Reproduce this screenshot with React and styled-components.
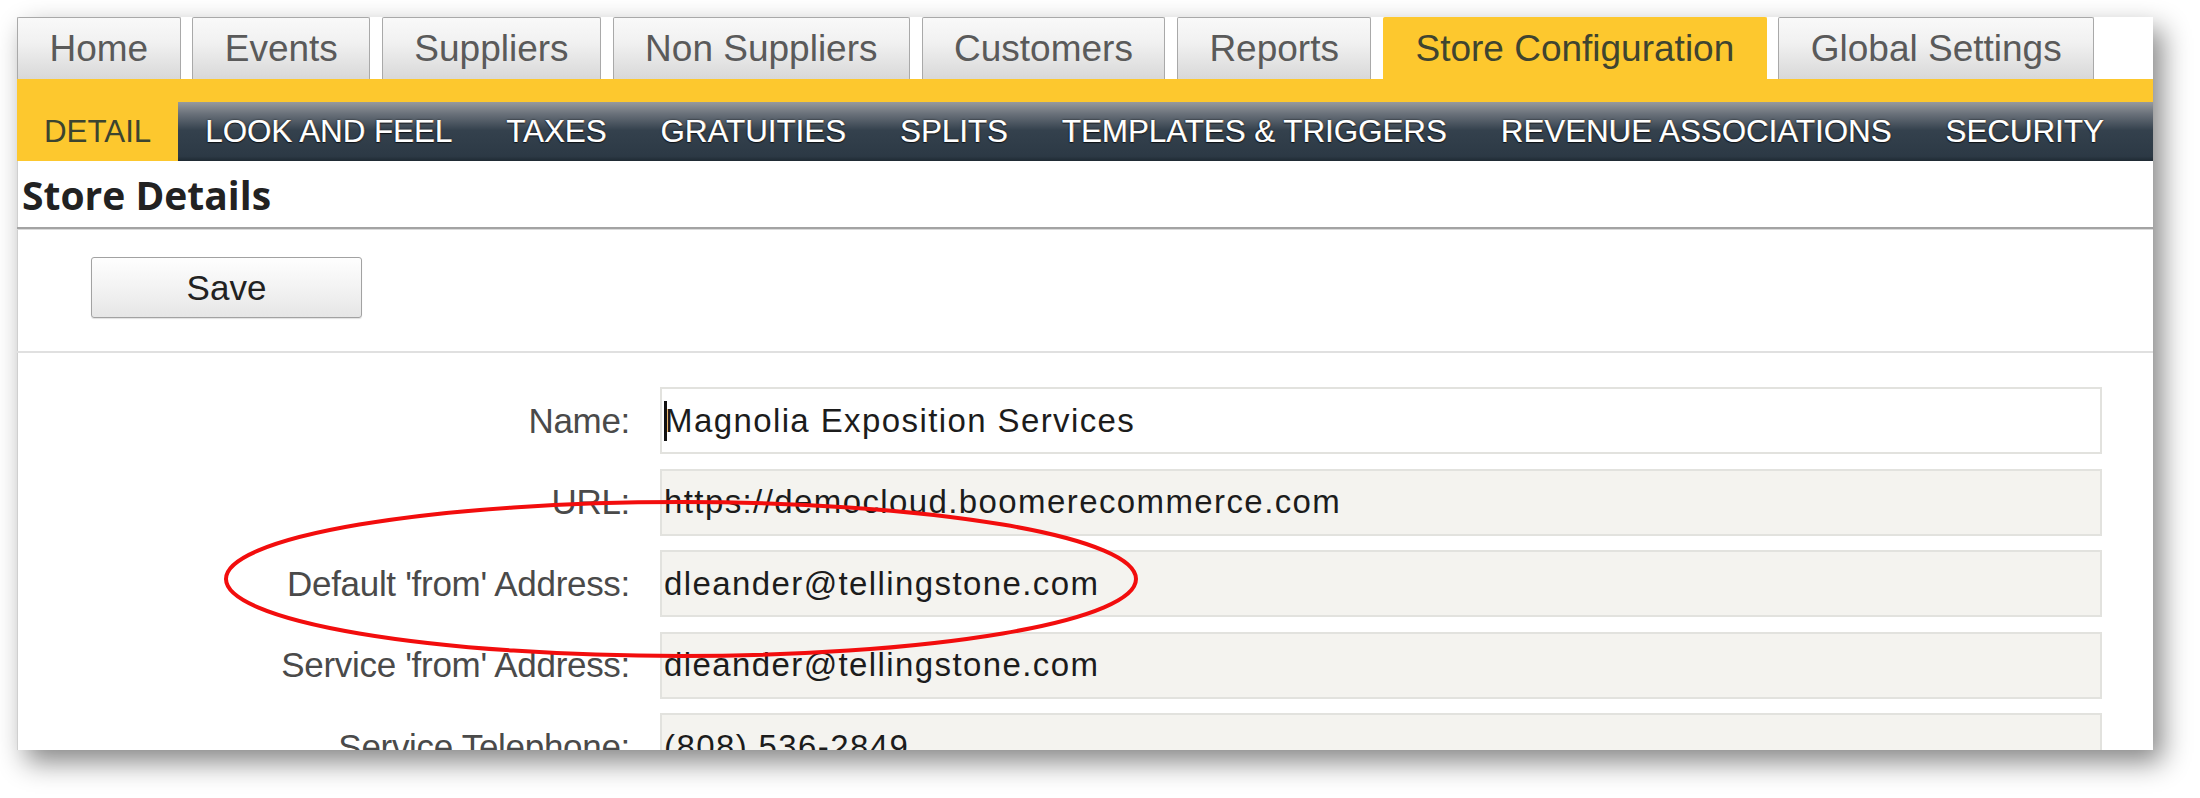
import React from "react";
import styled, { createGlobalStyle } from "styled-components";

const GlobalStyle = createGlobalStyle`
  html, body {
    margin: 0;
    padding: 0;
    background: #fff;
  }
  body {
    font-family: "Liberation Sans", Arial, sans-serif;
  }
`;

const YELLOW = "#fdc82e";

const Page = styled.div`
  width: 2200px;
  height: 798px;
  padding: 17px 0 0 17px;
  box-sizing: border-box;
  overflow: hidden;
`;

const Frame = styled.div`
  position: relative;
  width: 2136px;
  height: 733px;
  background: #fff;
  box-shadow: inset 1px 0 0 #cfcfcf, 9px 12px 26px rgba(0, 0, 0, 0.48);
  overflow: hidden;
`;

const TabRow = styled.div`
  display: flex;
  gap: 11.5px;
  height: 62px;
`;

const Tab = styled.div`
  display: flex;
  align-items: center;
  padding: 0 31.5px;
  font-size: 37px;
  color: ${(p) => (p.$active ? "#3f4430" : "#5a5a5a")};
  background: ${(p) =>
    p.$active ? YELLOW : "linear-gradient(#f9f9f9, #f1f1f1 40%, #d8d8d8)"};
  border: 1px solid ${(p) => (p.$active ? YELLOW : "#a9a9a9")};
  border-bottom: none;
  border-radius: 2px 2px 0 0;
  white-space: nowrap;
`;

const Strip = styled.div`
  height: 23px;
  background: ${YELLOW};
`;

const SubNav = styled.div`
  display: flex;
  height: 59px;
  background: linear-gradient(
    #979a9e 0%,
    #6a717a 20%,
    #34414d 48%,
    #2c3945 92%,
    #1f2a33 100%
  );
`;

const SubItem = styled.div`
  display: flex;
  align-items: center;
  padding: 0 27px;
  font-size: 31.3px;
  white-space: nowrap;
  color: ${(p) => (p.$active ? "#3c4430" : "#fff")};
  background: ${(p) => (p.$active ? YELLOW : "transparent")};
  text-shadow: ${(p) =>
    p.$active
      ? "none"
      : "0 0 2px rgba(0,0,0,0.8), 0 1px 1px rgba(0,0,0,0.6), 0.3px 0 0 #fff"};
`;

const Heading = styled.h1`
  margin: 0;
  height: 66px;
  display: flex;
  align-items: center;
  padding-left: 5px;
  font-family: "Open Sans", "Liberation Sans", sans-serif;
  font-weight: 700;
  font-size: 39px;
  color: #222;
  border-bottom: 2px solid #a3a3a3;
  box-shadow: 0 1px 0 #dadada;
`;

const Toolbar = styled.div`
  padding: 28px 0 33px 74px;
`;

const Button = styled.button`
  width: 271px;
  height: 61px;
  font-family: "Liberation Sans", Arial, sans-serif;
  font-size: 35px;
  color: #222;
  background: linear-gradient(#fefefe, #f3f3f3 50%, #e6e6e6);
  border: 1px solid #a2a2a2;
  border-radius: 3px;
  box-shadow: 0 1px 1px rgba(0, 0, 0, 0.12);
  padding: 0;
`;

const Panel = styled.div`
  border-top: 2px solid #e0e0e0;
  padding-top: 34px;
  display: grid;
  grid-template-columns: 613px 1442px;
  column-gap: 30px;
  row-gap: 14.5px;
`;

const Label = styled.div`
  display: flex;
  align-items: center;
  justify-content: flex-end;
  font-size: 35px;
  letter-spacing: -0.3px;
  color: #4a4a4a;
  white-space: nowrap;
`;

const Field = styled.div`
  height: 67px;
  box-sizing: border-box;
  display: flex;
  align-items: center;
  padding-left: 2px;
  font-size: 33px;
  letter-spacing: 1.4px;
  color: #1c1c1c;
  background: ${(p) => (p.$editable ? "#fff" : "#f4f3ef")};
  border: 2px solid #e2e2de;
  white-space: nowrap;
`;

const Caret = styled.span`
  display: inline-block;
  width: 3px;
  height: 40px;
  margin-right: -2px;
  background: #111;
`;

const Overlay = styled.svg`
  position: absolute;
  left: 0;
  top: 0;
  width: 100%;
  height: 100%;
  pointer-events: none;
`;

const tabs = [
  "Home",
  "Events",
  "Suppliers",
  "Non Suppliers",
  "Customers",
  "Reports",
  "Store Configuration",
  "Global Settings",
];

const subTabs = [
  "DETAIL",
  "LOOK AND FEEL",
  "TAXES",
  "GRATUITIES",
  "SPLITS",
  "TEMPLATES & TRIGGERS",
  "REVENUE ASSOCIATIONS",
  "SECURITY",
];

const fields = [
  { label: "Name:", value: "Magnolia Exposition Services", editable: true },
  { label: "URL:", value: "https://democloud.boomerecommerce.com" },
  { label: "Default 'from' Address:", value: "dleander@tellingstone.com" },
  { label: "Service 'from' Address:", value: "dleander@tellingstone.com" },
  { label: "Service Telephone:", value: "(808) 536-2849" },
];

export default function App() {
  return (
    <>
      <GlobalStyle />
      <Page>
        <Frame>
          <TabRow>
            {tabs.map((t) => (
              <Tab key={t} $active={t === "Store Configuration"}>
                {t}
              </Tab>
            ))}
          </TabRow>
          <Strip />
          <SubNav>
            {subTabs.map((t) => (
              <SubItem key={t} $active={t === "DETAIL"}>
                {t}
              </SubItem>
            ))}
          </SubNav>
          <Heading>Store Details</Heading>
          <Toolbar>
            <Button>Save</Button>
          </Toolbar>
          <Panel>
            {fields.map((f) => (
              <React.Fragment key={f.label}>
                <Label>{f.label}</Label>
                <Field $editable={f.editable}>
                  {f.editable && <Caret />}
                  {f.value}
                </Field>
              </React.Fragment>
            ))}
          </Panel>
          <Overlay viewBox="0 0 2136 733">
            <ellipse
              cx="664"
              cy="562"
              rx="455"
              ry="77"
              fill="none"
              stroke="#f20d0d"
              strokeWidth="4"
            />
          </Overlay>
        </Frame>
      </Page>
    </>
  );
}
